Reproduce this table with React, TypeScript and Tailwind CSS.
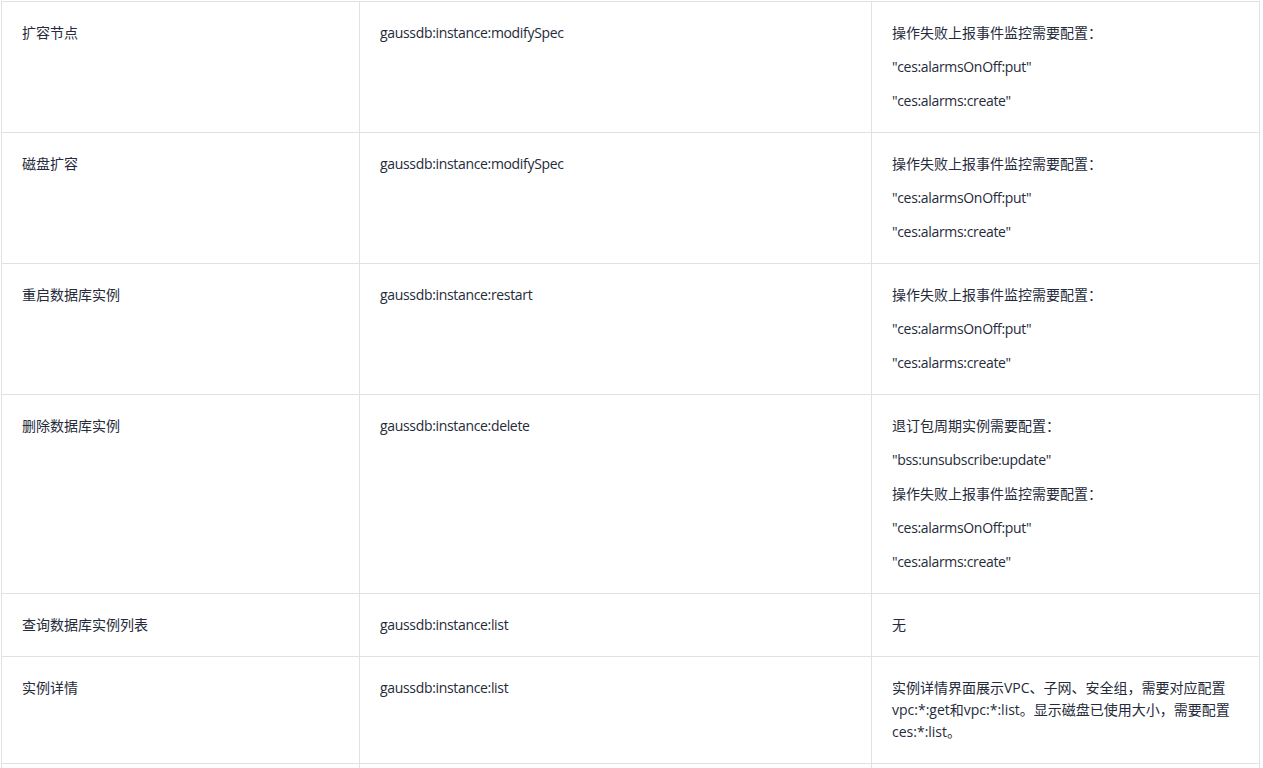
import React from "react";

type Row = { name: string; action: string; notes: string[] };

const rows: Row[] = [
  {
    name: "扩容节点",
    action: "gaussdb:instance:modifySpec",
    notes: ["操作失败上报事件监控需要配置：", '"ces:alarmsOnOff:put"', '"ces:alarms:create"'],
  },
  {
    name: "磁盘扩容",
    action: "gaussdb:instance:modifySpec",
    notes: ["操作失败上报事件监控需要配置：", '"ces:alarmsOnOff:put"', '"ces:alarms:create"'],
  },
  {
    name: "重启数据库实例",
    action: "gaussdb:instance:restart",
    notes: ["操作失败上报事件监控需要配置：", '"ces:alarmsOnOff:put"', '"ces:alarms:create"'],
  },
  {
    name: "删除数据库实例",
    action: "gaussdb:instance:delete",
    notes: [
      "退订包周期实例需要配置：",
      '"bss:unsubscribe:update"',
      "操作失败上报事件监控需要配置：",
      '"ces:alarmsOnOff:put"',
      '"ces:alarms:create"',
    ],
  },
  { name: "查询数据库实例列表", action: "gaussdb:instance:list", notes: ["无"] },
  {
    name: "实例详情",
    action: "gaussdb:instance:list",
    notes: [
      "实例详情界面展示VPC、子网、安全组，需要对应配置vpc:*:get和vpc:*:list。显示磁盘已使用大小，需要配置ces:*:list。",
    ],
  },
];

export default function App() {
  return (
    <div
      className="bg-white pt-px pl-px w-[1263px] h-[768px] overflow-hidden text-[14px] leading-[22px] text-[#252b3a]"
      style={{ fontFamily: '"Open Sans", "Noto Sans CJK SC", sans-serif' }}
    >
      <table className="border-collapse table-fixed w-[1258px] border border-[#dfe1e6]">
        <colgroup>
          <col className="w-[358px]" />
          <col className="w-[512px]" />
          <col className="w-[388px]" />
        </colgroup>
        <tbody>
          {rows.map((r, i) => (
            <tr key={i} className="border-b border-[#dfe1e6] align-top">
              <td className="border-r border-[#dfe1e6] px-5 py-5">{r.name}</td>
              <td className="border-r border-[#dfe1e6] px-5 py-5 tracking-[-0.33px]">{r.action}</td>
              <td className="px-5 py-5">
                <div className="flex flex-col gap-3">
                  {r.notes.map((n, j) => (
                    <p key={j} className={n.startsWith('"') ? "tracking-[-0.33px]" : ""}>
                      {n}
                    </p>
                  ))}
                </div>
              </td>
            </tr>
          ))}
          <tr>
            <td className="border-r border-[#dfe1e6] h-10"></td>
            <td className="border-r border-[#dfe1e6]"></td>
            <td></td>
          </tr>
        </tbody>
      </table>
    </div>
  );
}
